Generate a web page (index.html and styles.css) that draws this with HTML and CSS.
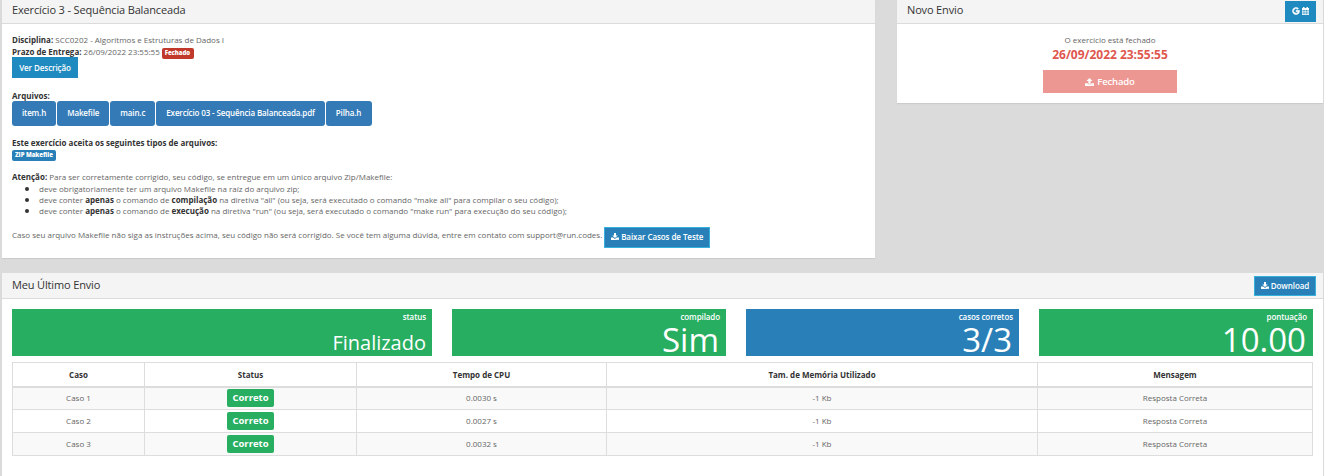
FILE: index.html
```html
<!DOCTYPE html>
<html lang="pt-BR">
<head>
<meta charset="utf-8">
<title>Exercício 3 - Sequência Balanceada</title>
<link rel="stylesheet" href="styles.css">
</head>
<body>
<svg class="sprite" aria-hidden="true">
  <symbol id="download" viewBox="0 0 16 14"><path fill-rule="evenodd" d="M6 0h4v5h3.500L8 10.200 2.500 5H6zM0 9h4.500L8 12l3.500-3H16v5H0zM11.500 11.800v1h1v-1zm2.200 0v1h1v-1z"/></symbol>
  <symbol id="upload" viewBox="0 0 16 14"><path fill-rule="evenodd" d="M8 0l5.500 5H10v5H6V5H2.500zM0 9h5v2h6V9h5v5H0zM11.500 11.800v1h1v-1zm2.200 0v1h1v-1z"/></symbol>
  <symbol id="google" viewBox="0 0 16 16"><path d="M8.200 6.600h6.700q.2.800.2 1.600c0 4.200-2.800 7-7 7a7.200 7.200 0 1 1 4.900-12.500l-2 2A4.400 4.400 0 1 0 12 9.300H8.200z" stroke="currentColor"/></symbol>
  <symbol id="calendar" viewBox="0 0 16 16"><path fill-rule="evenodd" d="M1 2h2V0h3v2h4V0h3v2h2v14H1zM2.200 6v2.200h2.300V6zm3.300 0v2.200h2.200V6zm3.200 0v2.200h2.200V6zm3.200 0v2.200h2V6zM2.200 9.200v2.200h2.300V9.200zm3.300 0v2.200h2.200V9.200zm3.200 0v2.200h2.200V9.200zm3.200 0v2.200h2V9.200zM2.200 12.400v2.200h2.300v-2.200zm3.300 0v2.200h2.200v-2.200zm3.200 0v2.200h2.200v-2.200zm3.200 0v2.200h2v-2.200z"/></symbol>
</svg>
<main class="page">
  <div class="top-row">
    <section class="panel exercise">
      <header class="panel-head first"><h2>Exercício 3 - Sequência Balanceada</h2></header>
      <div class="panel-body">
        <p class="line"><b>Disciplina:</b> SCC0202 - Algoritmos e Estruturas de Dados I</p>
        <p class="line due"><span><b>Prazo de Entrega:</b> 26/09/2022 23:55:55</span><span class="label red">Fechado</span></p>
        <a class="btn cyan describe">Ver Descrição</a>
        <p class="line files-title"><b>Arquivos:</b></p>
        <div class="files">
          <a class="file">item.h</a><a class="file">Makefile</a><a class="file">main.c</a><a class="file">Exercício 03 - Sequência Balanceada.pdf</a><a class="file">Pilha.h</a>
        </div>
        <p class="line types-title"><b>Este exercício aceita os seguintes tipos de arquivos:</b></p>
        <span class="label blue">ZIP Makefile</span>
        <p class="line attention"><b>Atenção:</b> Para ser corretamente corrigido, seu código, se entregue em um único arquivo Zip/Makefile:</p>
        <ul class="rules">
          <li>deve obrigatoriamente ter um arquivo Makefile na raíz do arquivo zip;</li>
          <li>deve conter <b>apenas</b> o comando de <b>compilação</b> na diretiva "all" (ou seja, será executado o comando "make all" para compilar o seu código);</li>
          <li>deve conter <b>apenas</b> o comando de <b>execução</b> na diretiva "run" (ou seja, será executado o comando "make run" para execução do seu código);</li>
        </ul>
        <div class="support"><p class="line">Caso seu arquivo Makefile não siga as instruções acima, seu código não será corrigido. Se você tem alguma dúvida, entre em contato com support@run.codes.</p><a class="btn outlined tests"><svg class="icon"><use href="#download"/></svg><span>Baixar Casos de Teste</span></a></div>
      </div>
    </section>
    <section class="panel submit">
      <header class="panel-head first"><h2>Novo Envio</h2><a class="btn cyan gcal"><svg class="g-icon"><use href="#google"/></svg><svg class="cal-icon"><use href="#calendar"/></svg></a></header>
      <div class="submit-body">
        <p class="line">O exercício está fechado</p>
        <p class="deadline">26/09/2022 23:55:55</p>
        <a class="closed"><svg class="icon large"><use href="#upload"/></svg><span>Fechado</span></a>
      </div>
    </section>
  </div>
  <section class="panel last">
    <header class="panel-head"><h2>Meu Último Envio</h2><a class="btn outlined download"><svg class="icon"><use href="#download"/></svg><span>Download</span></a></header>
    <div class="tiles">
      <div class="tile"><small>status</small><span class="value medium">Finalizado</span></div>
      <div class="tile"><small>compilado</small><span class="value">Sim</span></div>
      <div class="tile info"><small>casos corretos</small><span class="value">3/3</span></div>
      <div class="tile"><small>pontuação</small><span class="value">10.00</span></div>
    </div>
    <table class="cases">
      <colgroup><col class="c1"><col class="c2"><col class="c3"><col class="c4"><col class="c5"></colgroup>
      <thead><tr><th>Caso</th><th>Status</th><th>Tempo de CPU</th><th>Tam. de Memória Utilizado</th><th>Mensagem</th></tr></thead>
      <tbody>
        <tr><td>Caso 1</td><td><span class="ok">Correto</span></td><td>0.0030 s</td><td>-1 Kb</td><td>Resposta Correta</td></tr>
        <tr><td>Caso 2</td><td><span class="ok">Correto</span></td><td>0.0027 s</td><td>-1 Kb</td><td>Resposta Correta</td></tr>
        <tr><td>Caso 3</td><td><span class="ok">Correto</span></td><td>0.0032 s</td><td>-1 Kb</td><td>Resposta Correta</td></tr>
      </tbody>
    </table>
  </section>
</main>
</body>
</html>
```
FILE: styles.css
```css
* { box-sizing: border-box; }
body { margin: 0; background: #dbdbdb; color: #666; font: 8px/11px "Open Sans", sans-serif; overflow: hidden; }
.sprite { display: none; }
.page { height: 476px; padding: 0 1px 0 2px; overflow: hidden; }
h2, p, ul { margin: 0; }
b { color: #333; font-weight: 700; }
.top-row { display: flex; align-items: flex-start; justify-content: space-between; height: 273px; }
.panel { background: #fff; box-shadow: 0 1px 1px #ccc; }
.exercise { width: 873px; height: 258px; }
.submit { width: 426px; height: 103px; }
.panel-head { display: flex; align-items: center; justify-content: space-between; height: 26px; padding: 0 7px 0 10px; background: #f4f4f4; border-bottom: 1px solid #dbdbdb; }
.panel-head.first { height: 24px; padding-bottom: 3px; }
h2 { color: #333; font-size: 11px; font-weight: 400; line-height: 16px; letter-spacing: -.15px; }
.last h2 { padding-bottom: 2px; }
.panel-body { padding: 10px 10px 0; }
.line { height: 11px; line-height: 11px; white-space: nowrap; }
.due { display: flex; gap: 2px; height: 13px; padding-top: 1px; }
.label { display: block; width: max-content; height: 11px; padding: 0 3px; border-radius: 2px; color: #fff; font-size: 6px; font-weight: 800; line-height: 10px; letter-spacing: -.05px; }
.red { background: #c0392b; margin-top: 2px; width: 32px; }
.blue { background: #2980b9; margin-top: 2px; width: 44px; }
.btn { display: flex; align-items: center; justify-content: center; gap: 2px; color: #fff; font-weight: 600; letter-spacing: -.07px; white-space: nowrap; }
.cyan { background: #1f8abf; }
.outlined { background: #2980b9; border: 1px solid #35b1db; }
.describe { width: 66px; height: 21px; margin-top: -1px; }
.files-title { margin-top: 12px; }
.files { display: flex; gap: 1px; margin-top: 0; }
.file { height: 25px; padding: 0 10px; border-radius: 3px; background: #337ab7; color: #fff; font-weight: 600; line-height: 24px; letter-spacing: -.13px; }
.file:last-child { padding-right: 11px; }
.types-title { margin-top: 11px; }
.attention { margin-top: 10px; }
.rules { padding: 1px 0 0 27px; line-height: 11.200px; }
.rules li::marker { color: #333; font-size: 10px; }
.support { display: flex; gap: 2px; margin-top: 10px; }
.support .line { margin-top: 2px; }
.tests { width: 106px; height: 21px; padding-bottom: 1px; }
.icon { width: 8px; height: 7px; fill: currentColor; }
.icon.large { width: 9px; height: 8px; }
.gcal { gap: 1px; width: 31px; height: 21px; margin-top: 2px; }
.g-icon { width: 8px; height: 8px; fill: currentColor; }
.cal-icon { width: 9px; height: 8px; fill: currentColor; }
.submit-body { display: flex; flex-direction: column; align-items: center; padding-top: 10px; }
.deadline { margin-top: 2px; color: #e0574f; font-size: 12px; font-weight: 700; line-height: 16px; letter-spacing: -.02px; }
.closed { display: flex; align-items: center; justify-content: center; gap: 3px; width: 134px; height: 23px; margin-top: 7px; background: #ed9792; color: #fff; font-size: 9.500px; font-weight: 600; letter-spacing: -.15px; }
.last { height: 203px; }
.download { width: 62px; height: 20px; }
.tiles { display: grid; grid-template-columns: 420px 274px 273px 274px; gap: 20px; padding: 10px 10px 0; }
.tile { display: flex; flex-direction: column; align-items: flex-end; height: 47px; padding: 2px 6px 0 0; background: #27ae60; color: #fff; }
.tile.info { background: #2980b9; }
.tile small { font-size: 8px; font-weight: 600; line-height: 11px; letter-spacing: -.1px; }
.value { padding-right: 1px; font-size: 33px; line-height: 36px; }
.value.medium { padding: 0; font-size: 20px; line-height: 42px; }
.cases { width: 1301px; margin: 6px 0 0 10px; border-collapse: collapse; table-layout: fixed; text-align: center; }
.c1 { width: 132px; } .c2 { width: 212px; } .c3 { width: 250px; } .c4 { width: 431px; }
.cases th, .cases td { height: 23px; padding: 0 0 1px; border: 1px solid #ddd; }
.cases th { height: 24px; padding: 1px 0 0; border-bottom-width: 2px; color: #333; font-weight: 700; }
.cases tbody tr:nth-child(odd) { background: #f9f9f9; }
.ok { display: block; width: 47px; height: 18px; margin: 1px auto 0; border-radius: 2px; background: #27ae60; color: #fff; font-size: 9.500px; font-weight: 700; line-height: 18px; }
```
